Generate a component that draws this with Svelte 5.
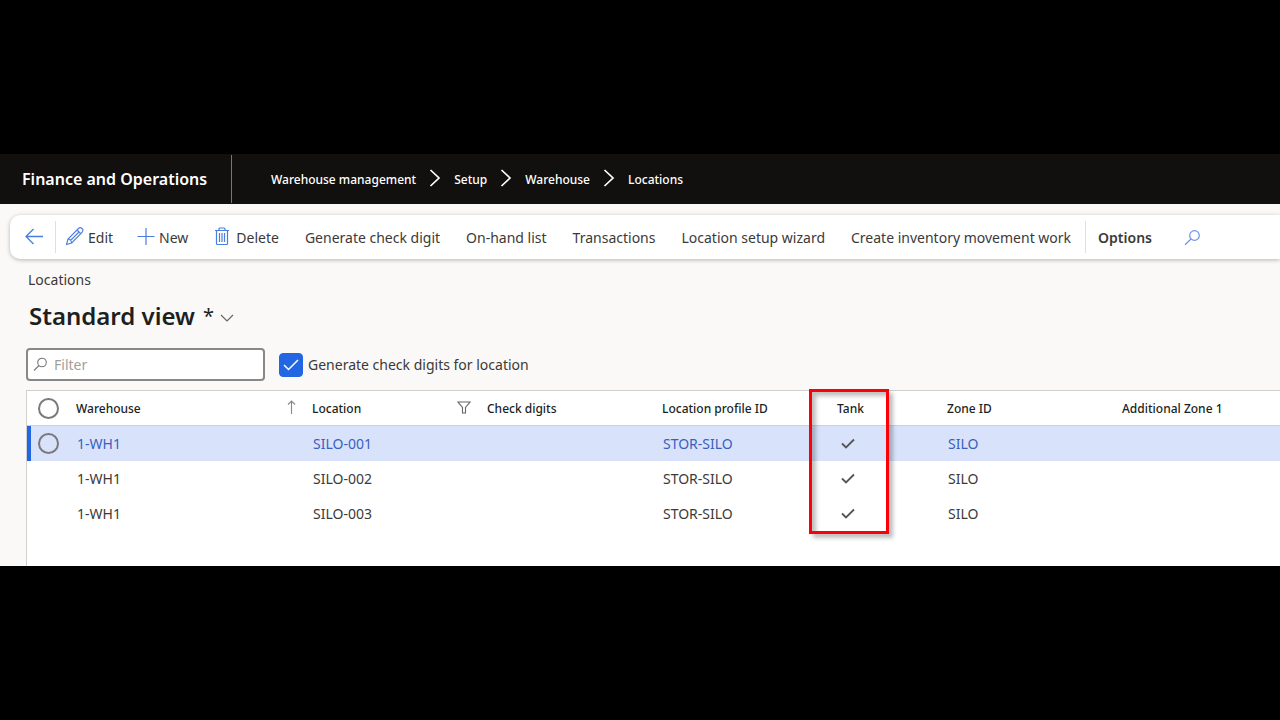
<script>
	const crumbs = ['Warehouse management', 'Setup', 'Warehouse', 'Locations'];
	const actions = [
		'Generate check digit',
		'On-hand list',
		'Transactions',
		'Location setup wizard',
		'Create inventory movement work',
	];

	const rows = [
		{ warehouse: '1-WH1', location: 'SILO-001', profile: 'STOR-SILO', tank: true, zone: 'SILO' },
		{ warehouse: '1-WH1', location: 'SILO-002', profile: 'STOR-SILO', tank: true, zone: 'SILO' },
		{ warehouse: '1-WH1', location: 'SILO-003', profile: 'STOR-SILO', tank: true, zone: 'SILO' },
	];

	let active = 0;
	let filter = '';
	let generateDigits = true;
</script>

<div class="screen">
	<div class="window">
		<header class="topbar">
			<div class="brand">Finance and Operations</div>
			<nav class="crumbs" aria-label="Breadcrumb">
				{#each crumbs as crumb, i}
					{#if i > 0}
						<svg width="12" height="20" viewBox="0 0 12 20" fill="none" stroke="#fff" stroke-width="1.7">
							<path d="M1.5 1 10 9 1.500 17" />
						</svg>
					{/if}
					<a href="#{crumb}">{crumb}</a>
				{/each}
			</nav>
		</header>

		<div class="toolbar">
			<button class="back" aria-label="Back">
				<svg width="20" height="18" viewBox="0 0 20 18" fill="none" stroke="#4a7de0" stroke-width="1.3">
					<path d="M19 8.500H2M9.500 1 2 8.500 9.500 16" />
				</svg>
			</button>
			<button class="edit">
				<svg width="20" height="20" viewBox="0 0 20 20" fill="none" stroke="#4a7de0" stroke-width="1.1">
					<path d="M1.500 17.500 3 12 13.500 1.500q1.700-1.600 3.500 0t0 4L6.700 16zM12 3l4 4M3 12q3 0 3.700 4M5.500 13.500 14.500 4.500" />
				</svg>
				Edit
			</button>
			<button class="new">
				<svg width="18" height="18" viewBox="0 0 18 18" fill="none" stroke="#4a7de0" stroke-width="1.2">
					<path d="M9 0v17M0.500 8.500h17" />
				</svg>
				New
			</button>
			<button class="delete">
				<svg width="16" height="20" viewBox="0 0 16 20" fill="none" stroke="#4a7de0" stroke-width="1.2">
					<path d="M1 3.500h14M5 3.500V2q0-1 1-1h4q1 0 1 1v1.500M2.500 3.500v13q0 1 1 1h9q1 0 1-1v-13M5.500 6v9M8 6v9M10.500 6v9" />
				</svg>
				Delete
			</button>
			{#each actions as action}
				<button class="action">{action}</button>
			{/each}
			<button class="options">Options</button>
			<button class="search" aria-label="Search">
				<svg width="17" height="17" viewBox="0 0 17 17" fill="none" stroke="#6c93ea" stroke-width="1.2">
					<circle cx="10.500" cy="6.500" r="4.800" />
					<path d="M7 10 1 15.700" />
				</svg>
			</button>
		</div>

		<main>
			<div class="caption">Locations</div>
			<h1>
				<button class="view">
					Standard view <span class="star">*</span>
					<svg width="14" height="14" viewBox="0 0 14 14" fill="none" stroke="#666" stroke-width="1.2">
						<path d="M1 6 7 12 13 6" />
					</svg>
				</button>
			</h1>

			<div class="filters">
				<label class="filter">
					<svg width="15" height="15" viewBox="0 0 15 15" fill="none" stroke="#777" stroke-width="1.1">
						<circle cx="9" cy="5.500" r="4.300" />
						<path d="M6 8.500 1 13.500" />
					</svg>
					<input type="text" placeholder="Filter" aria-label="Filter" bind:value={filter} />
				</label>
				<label class="check">
					<span class="box">
						<input type="checkbox" bind:checked={generateDigits} />
						{#if generateDigits}
							<svg width="16" height="12" viewBox="0 0 16 12" fill="none" stroke="#fff" stroke-width="1.5">
								<path d="M1 6 5.500 10.500 15 1" />
							</svg>
						{/if}
					</span>
					<span>Generate check digits for location</span>
				</label>
			</div>

			<div class="grid">
				<table>
					<colgroup>
						<col class="c-select" />
						<col class="c-warehouse" />
						<col class="c-wide" />
						<col class="c-wide" />
						<col class="c-wide" />
						<col class="c-tank" />
						<col class="c-wide" />
						<col />
					</colgroup>
					<thead>
						<tr>
							<th><input class="round" type="checkbox" aria-label="Select all rows" /></th>
							<th>
								<div class="head">
									Warehouse
									<svg width="9" height="17" viewBox="0 0 9 17" fill="none" stroke="#888" stroke-width="1.1">
										<path d="M4.500 14V1M1 4.500 4.500 1 8 4.500" />
									</svg>
								</div>
							</th>
							<th>
								<div class="head">
									Location
									<svg width="14" height="15" viewBox="0 0 14 15" fill="none" stroke="#666" stroke-width="1.1">
										<path d="M1 1h12L8.500 6.500V12h-3V6.500z" />
									</svg>
								</div>
							</th>
							<th>Check digits</th>
							<th>Location profile ID</th>
							<th class="tank">Tank<span class="highlight"></span></th>
							<th>Zone ID</th>
							<th>Additional Zone 1</th>
						</tr>
					</thead>
					<tbody>
						{#each rows as row, i}
							<tr class:active={i === active} on:click={() => (active = i)}>
								<td>
									{#if i === active}
										<input class="round" type="checkbox" aria-label="Select {row.location}" />
									{/if}
								</td>
								<td>{row.warehouse}</td>
								<td>{row.location}</td>
								<td></td>
								<td>{row.profile}</td>
								<td class="mark">
									{#if row.tank}
										<svg width="14" height="11" viewBox="0 0 14 11" fill="none" stroke="#555" stroke-width="1.8">
											<path d="M1 5.500 5 9.500 13 1.500" />
										</svg>
									{/if}
								</td>
								<td>{row.zone}</td>
								<td></td>
							</tr>
						{/each}
					</tbody>
				</table>
			</div>
		</main>
	</div>
</div>

<style>
	:global(body) {
		margin: 0;
		background: #000;
	}

	.screen {
		min-height: 100vh;
		display: flex;
		flex-direction: column;
		justify-content: center;
		overflow: hidden;
		font-family: 'Segoe UI', 'Noto Sans', 'Open Sans', sans-serif;
		font-size: 14px;
		color: #3b3a39;
	}

	.window {
		background: #faf9f8;
	}

	svg {
		display: block;
		flex: none;
	}

	button {
		display: flex;
		align-items: center;
		padding: 0;
		border: 0;
		background: none;
		font: inherit;
		color: inherit;
		white-space: nowrap;
		cursor: pointer;
	}

	.topbar {
		display: flex;
		align-items: center;
		height: 50px;
		background: #11100f;
		color: #fff;
	}

	.brand {
		box-sizing: border-box;
		width: 232px;
		padding-left: 22px;
		border-right: 1px solid #797775;
		font-size: 16px;
		font-weight: 600;
		line-height: 48px;
		white-space: nowrap;
	}

	.crumbs {
		display: flex;
		align-items: center;
		gap: 13px;
		padding-left: 39px;
		font-size: 12px;
		font-weight: 500;
	}

	.crumbs a {
		color: inherit;
		text-decoration: none;
		white-space: nowrap;
	}

	.toolbar {
		display: flex;
		align-items: center;
		height: 44px;
		margin: 11px 0 0 10px;
		padding-left: 14px;
		border-radius: 10px 0 0 10px;
		background: #fff;
		box-shadow: 0 1px 4px rgba(0, 0, 0, 0.28);
	}

	.toolbar button {
		height: 32px;
	}

	.toolbar .back {
		padding-right: 11px;
		border-right: 1px solid #e1dfdd;
	}

	.edit {
		gap: 3px;
		margin-left: 9px;
	}

	.new {
		gap: 4px;
		margin-left: 24px;
	}

	.delete {
		gap: 6px;
		margin-left: 26px;
	}

	.action {
		margin-left: 26px;
	}

	.toolbar .options {
		margin-left: 14px;
		padding-left: 12px;
		border-left: 1px solid #e1dfdd;
		font-weight: 600;
	}

	.search {
		margin-left: 32px;
	}

	main {
		padding: 11px 0 0 26px;
	}

	.caption {
		padding-left: 2px;
		line-height: 20px;
	}

	h1 {
		margin: 8px 0 0 3px;
		font-size: 24px;
		font-weight: 600;
		line-height: 36px;
		color: #201f1e;
	}

	.star {
		margin: 0 6px 0 8px;
		font-size: 20px;
		font-weight: 400;
	}

	.filters {
		display: flex;
		align-items: center;
		gap: 14px;
		margin-top: 14px;
	}

	.filter {
		box-sizing: border-box;
		display: flex;
		align-items: center;
		gap: 6px;
		width: 239px;
		height: 33px;
		padding: 0 5px;
		border: 2px solid #8a8886;
		border-radius: 4px;
		background: #fff;
	}

	.filter input {
		flex: 1;
		min-width: 0;
		padding: 0;
		border: 0;
		outline: 0;
		background: none;
		font: inherit;
		color: inherit;
	}

	.filter input::placeholder {
		color: #a19f9d;
	}

	.check {
		display: flex;
		align-items: center;
		gap: 5px;
	}

	.box {
		display: grid;
		place-items: center;
	}

	.box input,
	.box svg {
		grid-area: 1 / 1;
	}

	.box svg {
		pointer-events: none;
	}

	.box input {
		appearance: none;
		box-sizing: border-box;
		width: 24px;
		height: 24px;
		margin: 0;
		border: 1px solid #2266e3;
		border-radius: 4px;
		background: #fff;
	}

	.box input:checked {
		background: #2266e3;
	}

	.grid {
		margin-top: 9px;
		padding-bottom: 35px;
		border-top: 1px solid #d2d0ce;
		border-left: 1px solid #d2d0ce;
		background: #fff;
	}

	table {
		width: 100%;
		table-layout: fixed;
		border-collapse: separate;
		border-spacing: 0;
	}

	.c-select {
		width: 49px;
	}

	.c-warehouse {
		width: 236px;
	}

	.c-wide {
		width: 175px;
	}

	.c-tank {
		width: 110px;
	}

	th,
	td {
		box-sizing: border-box;
		height: 35px;
		padding: 0;
		text-align: left;
		white-space: nowrap;
	}

	th {
		border-bottom: 1px solid #d2d0ce;
		font-size: 12px;
		font-weight: 500;
		color: #201f1e;
	}

	td {
		padding-left: 1px;
	}

	th:first-child {
		padding-left: 11px;
	}

	td:first-child {
		padding-left: 7px;
		border-left: 4px solid transparent;
	}

	.head {
		display: flex;
		align-items: center;
		justify-content: space-between;
		padding-right: 16px;
	}

	.round {
		appearance: none;
		display: block;
		box-sizing: border-box;
		width: 21px;
		height: 21px;
		margin: 0;
		border: 2px solid #7a7a7a;
		border-radius: 50%;
	}

	.active {
		background: #d8e3fb;
		color: #3860be;
	}

	.active td:first-child {
		border-left-color: #2266e3;
	}

	.tank {
		position: relative;
	}

	td.mark {
		padding-left: 4px;
	}

	/* frame drawn over the whole tank column */
	.highlight {
		position: absolute;
		top: -2px;
		left: -28px;
		box-sizing: border-box;
		width: 80px;
		height: 145px;
		border: 3px solid #fb0007;
		box-shadow:
			4px 4px 4px rgba(0, 0, 0, 0.25),
			inset 4px 4px 4px rgba(0, 0, 0, 0.25);
		pointer-events: none;
	}
</style>
